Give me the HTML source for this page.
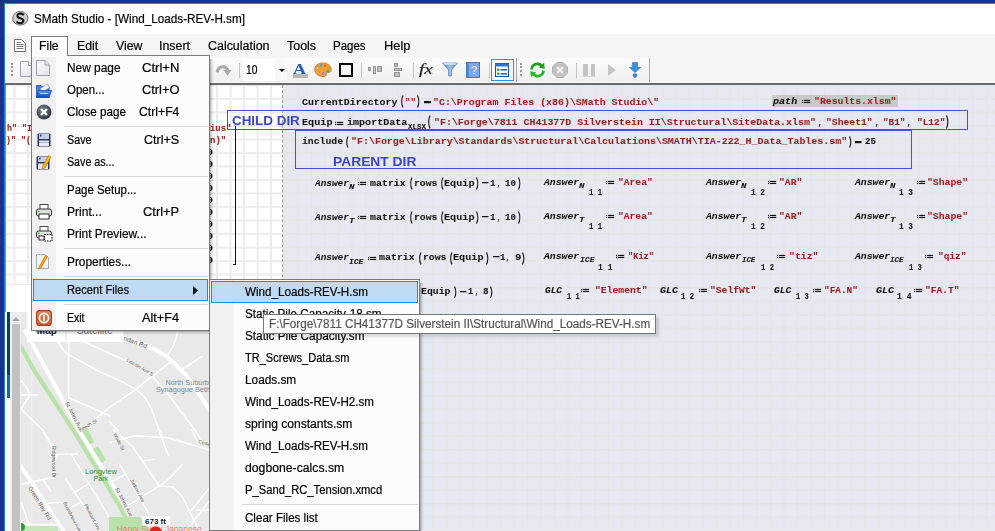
<!DOCTYPE html>
<html><head><meta charset="utf-8"><style>
*{margin:0;padding:0;box-sizing:border-box}
html,body{width:995px;height:531px;overflow:hidden;background:#fff}
body{position:relative;font-family:"Liberation Sans",sans-serif;font-size:12px;color:#000}
.a{position:absolute;white-space:nowrap}
.t{transform-origin:0 0}
.t.s{-webkit-text-stroke:0.2px currentColor}
.t.m{-webkit-text-stroke:0.08px currentColor}
svg.a{overflow:visible}
</style></head><body>
<div class="a" style="left:0;top:0;width:995px;height:531px;background:#fff"></div>
<div class="a" style="left:5px;top:85px;width:990px;height:446px;background-color:#e6e9f1;background-image:linear-gradient(to right,#e4e5e9 1.4px,transparent 1.4px),linear-gradient(to bottom,#e4e5e9 1.4px,transparent 1.6px);background-size:13.5px 13.5px;background-position:9.0px -0.6px"></div>
<div class="a" style="left:6px;top:85px;width:277px;height:199px;background-color:#fff;background-image:linear-gradient(to right,#ececec 1.5px,transparent 1.5px),linear-gradient(to bottom,#ececec 1.5px,transparent 1.6px);background-size:13.5px 13.5px;background-position:7.6px -0.5px"></div>
<div class="a" style="left:6px;top:284px;width:277px;height:28px;background:#fff;border-top:1px solid #f3e6dc"></div>
<div class="a" style="left:282px;top:85px;width:0;height:446px;border-left:1px dashed #9a9a9a"></div>
<div class="a" style="left:5px;top:85px;width:1px;height:227px;background:#8a8a8a"></div>
<div class="a" style="left:5px;top:4px;width:990px;height:30px;background:#fff"></div>
<div class="a" style="left:5px;top:34px;width:990px;height:49px;background:#f5f5f5"></div>
<div class="a" style="left:5px;top:83px;width:990px;height:2px;background:#6b6b6b"></div>
<div class="a" style="left:8px;top:58px;width:509px;height:24px;background:linear-gradient(#fcfcfc,#f0f0f0);border-radius:3px 0 0 3px;border-right:1px solid #a9a9a9"></div>
<div class="a" style="left:517px;top:58px;width:133px;height:24px;background:linear-gradient(#fcfcfc,#f0f0f0);border-radius:3px 0 0 3px;border-right:1px solid #a9a9a9"></div>
<div class="a" style="left:0;top:0;width:995px;height:3px;background:#1b3190"></div>
<div class="a" style="left:0;top:0;width:4px;height:531px;background:#1b3190"></div>
<div class="a" style="left:4px;top:3px;width:991px;height:1px;background:#1f86d6"></div>
<div class="a" style="left:4px;top:3px;width:1px;height:528px;background:#1f86d6"></div>
<svg class="a" style="left:12px;top:11px" width="17" height="15" viewBox="0 0 17 15">
<ellipse cx="8.3" cy="7.3" rx="7.6" ry="6.8" fill="#d0d0d0" stroke="#6a6a6a" stroke-width="1"/>
<path d="M11.6 4.2 C10.8 2.8 8.9 2.4 7.2 2.8 C5.3 3.3 4.8 5.2 6.2 6.3 C7.5 7.3 10.6 7.2 11.3 9 C12 10.8 10.2 12.2 8.2 12.2 C6.6 12.2 5.3 11.6 4.6 10.5" fill="none" stroke="#111" stroke-width="2.1"/>
</svg>
<svg class="a" style="left:13px;top:38px" width="14" height="15" viewBox="0 0 14 15"><path d="M1.5 1.5 H8.5 L12.5 5.5 V13.5 H1.5 Z" fill="#fff" stroke="#6e6e6e"/><path d="M3.5 4.5H8M3.5 6.5H10.5M3.5 8.5H10.5M3.5 10.5H10.5" stroke="#7a7a7a"/></svg>
<div class="a" style="left:31px;top:36px;width:37px;height:22px;background:#fcfcfc;border:1px solid #7b7b7b;border-bottom:none"></div>
<div class="a t s" style="left:33.70px;top:12.68px;font-size:12.5px;line-height:12.5px;transform:scaleX(0.9374);">SMath Studio - [Wind_Loads-REV-H.sm]</div>
<div class="a t s" style="left:39.40px;top:40.00px;font-size:12px;line-height:12px;transform:scaleX(1.0132);">File</div>
<div class="a t s" style="left:76.60px;top:40.00px;font-size:12px;line-height:12px;transform:scaleX(1.0296);">Edit</div>
<div class="a t s" style="left:115.50px;top:40.00px;font-size:12px;line-height:12px;transform:scaleX(1.0234);">View</div>
<div class="a t s" style="left:159.20px;top:40.00px;font-size:12px;line-height:12px;transform:scaleX(1.0328);">Insert</div>
<div class="a t s" style="left:207.70px;top:40.00px;font-size:12px;line-height:12px;transform:scaleX(1.0358);">Calculation</div>
<div class="a t s" style="left:286.90px;top:40.00px;font-size:12px;line-height:12px;transform:scaleX(1.0387);">Tools</div>
<div class="a t s" style="left:333.40px;top:40.00px;font-size:12px;line-height:12px;transform:scaleX(0.9579);">Pages</div>
<div class="a t s" style="left:383.60px;top:40.00px;font-size:12px;line-height:12px;transform:scaleX(1.0694);">Help</div>
<div class="a" style="left:772px;top:95px;width:126px;height:12px;background:#c9c9c9"></div>
<svg class="a" style="left:399.5px;top:95px" width="4" height="13"><path d="M3 0.5 Q0.3 6.5 3 12.5" fill="none" stroke="#141414" stroke-width="1.1"/></svg>
<svg class="a" style="left:417.2px;top:95px" width="4" height="13"><path d="M0.5 0.5 Q3.2 6.5 0.5 12.5" fill="none" stroke="#141414" stroke-width="1.1"/></svg>
<svg class="a" style="left:423.5px;top:101px" width="8" height="3"><rect x="0" y="0" width="7" height="2.2" fill="#141414"/></svg>
<svg class="a" style="left:801.50px;top:99.10px" width="9" height="5" viewBox="0 0 9 5"><rect x="0" y="0.9" width="1.2" height="1.2" fill="#141414"/><rect x="0" y="2.9" width="1.2" height="1.2" fill="#141414"/><rect x="2" y="0.85" width="6.2" height="1.2" fill="#141414"/><rect x="2" y="2.85" width="6.2" height="1.2" fill="#141414"/></svg>
<div class="a" style="left:227px;top:109.6px;width:741px;height:20.4px;border:1.5px solid #4650d2"></div>
<svg class="a" style="left:334.80px;top:120.50px" width="9" height="5" viewBox="0 0 9 5"><rect x="0" y="0.9" width="1.2" height="1.2" fill="#141414"/><rect x="0" y="2.9" width="1.2" height="1.2" fill="#141414"/><rect x="2" y="0.85" width="6.2" height="1.2" fill="#141414"/><rect x="2" y="2.85" width="6.2" height="1.2" fill="#141414"/></svg>
<svg class="a" style="left:427px;top:115.0px" width="4" height="14"><path d="M3 0.5 Q0.3 7.0 3 13.5" fill="none" stroke="#141414" stroke-width="1.1"/></svg>
<svg class="a" style="left:946.4px;top:115.0px" width="4" height="14"><path d="M0.5 0.5 Q3.2 7.0 0.5 13.5" fill="none" stroke="#141414" stroke-width="1.1"/></svg>
<div class="a" style="left:295px;top:130.2px;width:617px;height:38.8px;border:1.5px solid #4650d2"></div>
<svg class="a" style="left:344.6px;top:136.4px" width="4" height="12"><path d="M3 0.5 Q0.3 6.0 3 11.5" fill="none" stroke="#141414" stroke-width="1.1"/></svg>
<svg class="a" style="left:849px;top:136.4px" width="4" height="12"><path d="M0.5 0.5 Q3.2 6.0 0.5 11.5" fill="none" stroke="#141414" stroke-width="1.1"/></svg>
<svg class="a" style="left:854.5px;top:140.9px" width="7" height="3"><rect x="0" y="0" width="6.5" height="2.2" fill="#141414"/></svg>
<svg class="a" style="left:358.00px;top:181.30px" width="9" height="5" viewBox="0 0 9 5"><rect x="0" y="0.9" width="1.2" height="1.2" fill="#141414"/><rect x="0" y="2.9" width="1.2" height="1.2" fill="#141414"/><rect x="2" y="0.85" width="6.2" height="1.2" fill="#141414"/><rect x="2" y="2.85" width="6.2" height="1.2" fill="#141414"/></svg>
<svg class="a" style="left:408.5px;top:177.3px" width="4" height="13"><path d="M3 0.5 Q0.3 6.5 3 12.5" fill="none" stroke="#141414" stroke-width="1.1"/></svg>
<svg class="a" style="left:439.5px;top:177.3px" width="4" height="13"><path d="M3 0.5 Q0.3 6.5 3 12.5" fill="none" stroke="#141414" stroke-width="1.1"/></svg>
<svg class="a" style="left:476.2px;top:177.3px" width="4" height="13"><path d="M0.5 0.5 Q3.2 6.5 0.5 12.5" fill="none" stroke="#141414" stroke-width="1.1"/></svg>
<svg class="a" style="left:481.80px;top:181.00px" width="6.50" height="3"><rect x="0" y="1" width="6.50" height="1.25" fill="#141414"/></svg>
<svg class="a" style="left:518.4px;top:177.3px" width="4" height="13"><path d="M0.5 0.5 Q3.2 6.5 0.5 12.5" fill="none" stroke="#141414" stroke-width="1.1"/></svg>
<svg class="a" style="left:358.00px;top:215.00px" width="9" height="5" viewBox="0 0 9 5"><rect x="0" y="0.9" width="1.2" height="1.2" fill="#141414"/><rect x="0" y="2.9" width="1.2" height="1.2" fill="#141414"/><rect x="2" y="0.85" width="6.2" height="1.2" fill="#141414"/><rect x="2" y="2.85" width="6.2" height="1.2" fill="#141414"/></svg>
<svg class="a" style="left:408.5px;top:211px" width="4" height="13"><path d="M3 0.5 Q0.3 6.5 3 12.5" fill="none" stroke="#141414" stroke-width="1.1"/></svg>
<svg class="a" style="left:439.5px;top:211px" width="4" height="13"><path d="M3 0.5 Q0.3 6.5 3 12.5" fill="none" stroke="#141414" stroke-width="1.1"/></svg>
<svg class="a" style="left:476.2px;top:211px" width="4" height="13"><path d="M0.5 0.5 Q3.2 6.5 0.5 12.5" fill="none" stroke="#141414" stroke-width="1.1"/></svg>
<svg class="a" style="left:481.80px;top:214.70px" width="6.50" height="3"><rect x="0" y="1" width="6.50" height="1.25" fill="#141414"/></svg>
<svg class="a" style="left:518.4px;top:211px" width="4" height="13"><path d="M0.5 0.5 Q3.2 6.5 0.5 12.5" fill="none" stroke="#141414" stroke-width="1.1"/></svg>
<svg class="a" style="left:367.80px;top:255.70px" width="9" height="5" viewBox="0 0 9 5"><rect x="0" y="0.9" width="1.2" height="1.2" fill="#141414"/><rect x="0" y="2.9" width="1.2" height="1.2" fill="#141414"/><rect x="2" y="0.85" width="6.2" height="1.2" fill="#141414"/><rect x="2" y="2.85" width="6.2" height="1.2" fill="#141414"/></svg>
<svg class="a" style="left:417.5px;top:251.7px" width="4" height="13"><path d="M3 0.5 Q0.3 6.5 3 12.5" fill="none" stroke="#141414" stroke-width="1.1"/></svg>
<svg class="a" style="left:448.7px;top:251.7px" width="4" height="13"><path d="M3 0.5 Q0.3 6.5 3 12.5" fill="none" stroke="#141414" stroke-width="1.1"/></svg>
<svg class="a" style="left:486px;top:251.7px" width="4" height="13"><path d="M0.5 0.5 Q3.2 6.5 0.5 12.5" fill="none" stroke="#141414" stroke-width="1.1"/></svg>
<svg class="a" style="left:492.60px;top:255.40px" width="6.50" height="3"><rect x="0" y="1" width="6.50" height="1.25" fill="#141414"/></svg>
<svg class="a" style="left:522.2px;top:251.7px" width="4" height="13"><path d="M0.5 0.5 Q3.2 6.5 0.5 12.5" fill="none" stroke="#141414" stroke-width="1.1"/></svg>
<svg class="a" style="left:605.60px;top:180.10px" width="9" height="5" viewBox="0 0 9 5"><rect x="0" y="0.9" width="1.2" height="1.2" fill="#141414"/><rect x="0" y="2.9" width="1.2" height="1.2" fill="#141414"/><rect x="2" y="0.85" width="6.2" height="1.2" fill="#141414"/><rect x="2" y="2.85" width="6.2" height="1.2" fill="#141414"/></svg>
<svg class="a" style="left:767.70px;top:180.10px" width="9" height="5" viewBox="0 0 9 5"><rect x="0" y="0.9" width="1.2" height="1.2" fill="#141414"/><rect x="0" y="2.9" width="1.2" height="1.2" fill="#141414"/><rect x="2" y="0.85" width="6.2" height="1.2" fill="#141414"/><rect x="2" y="2.85" width="6.2" height="1.2" fill="#141414"/></svg>
<svg class="a" style="left:916.50px;top:180.10px" width="9" height="5" viewBox="0 0 9 5"><rect x="0" y="0.9" width="1.2" height="1.2" fill="#141414"/><rect x="0" y="2.9" width="1.2" height="1.2" fill="#141414"/><rect x="2" y="0.85" width="6.2" height="1.2" fill="#141414"/><rect x="2" y="2.85" width="6.2" height="1.2" fill="#141414"/></svg>
<svg class="a" style="left:605.60px;top:214.00px" width="9" height="5" viewBox="0 0 9 5"><rect x="0" y="0.9" width="1.2" height="1.2" fill="#141414"/><rect x="0" y="2.9" width="1.2" height="1.2" fill="#141414"/><rect x="2" y="0.85" width="6.2" height="1.2" fill="#141414"/><rect x="2" y="2.85" width="6.2" height="1.2" fill="#141414"/></svg>
<svg class="a" style="left:767.70px;top:214.00px" width="9" height="5" viewBox="0 0 9 5"><rect x="0" y="0.9" width="1.2" height="1.2" fill="#141414"/><rect x="0" y="2.9" width="1.2" height="1.2" fill="#141414"/><rect x="2" y="0.85" width="6.2" height="1.2" fill="#141414"/><rect x="2" y="2.85" width="6.2" height="1.2" fill="#141414"/></svg>
<svg class="a" style="left:916.50px;top:214.00px" width="9" height="5" viewBox="0 0 9 5"><rect x="0" y="0.9" width="1.2" height="1.2" fill="#141414"/><rect x="0" y="2.9" width="1.2" height="1.2" fill="#141414"/><rect x="2" y="0.85" width="6.2" height="1.2" fill="#141414"/><rect x="2" y="2.85" width="6.2" height="1.2" fill="#141414"/></svg>
<svg class="a" style="left:615.60px;top:254.20px" width="9" height="5" viewBox="0 0 9 5"><rect x="0" y="0.9" width="1.2" height="1.2" fill="#141414"/><rect x="0" y="2.9" width="1.2" height="1.2" fill="#141414"/><rect x="2" y="0.85" width="6.2" height="1.2" fill="#141414"/><rect x="2" y="2.85" width="6.2" height="1.2" fill="#141414"/></svg>
<svg class="a" style="left:777.40px;top:254.20px" width="9" height="5" viewBox="0 0 9 5"><rect x="0" y="0.9" width="1.2" height="1.2" fill="#141414"/><rect x="0" y="2.9" width="1.2" height="1.2" fill="#141414"/><rect x="2" y="0.85" width="6.2" height="1.2" fill="#141414"/><rect x="2" y="2.85" width="6.2" height="1.2" fill="#141414"/></svg>
<svg class="a" style="left:925.40px;top:254.20px" width="9" height="5" viewBox="0 0 9 5"><rect x="0" y="0.9" width="1.2" height="1.2" fill="#141414"/><rect x="0" y="2.9" width="1.2" height="1.2" fill="#141414"/><rect x="2" y="0.85" width="6.2" height="1.2" fill="#141414"/><rect x="2" y="2.85" width="6.2" height="1.2" fill="#141414"/></svg>
<svg class="a" style="left:581.20px;top:288.00px" width="9" height="5" viewBox="0 0 9 5"><rect x="0" y="0.9" width="1.2" height="1.2" fill="#141414"/><rect x="0" y="2.9" width="1.2" height="1.2" fill="#141414"/><rect x="2" y="0.85" width="6.2" height="1.2" fill="#141414"/><rect x="2" y="2.85" width="6.2" height="1.2" fill="#141414"/></svg>
<svg class="a" style="left:698.90px;top:288.00px" width="9" height="5" viewBox="0 0 9 5"><rect x="0" y="0.9" width="1.2" height="1.2" fill="#141414"/><rect x="0" y="2.9" width="1.2" height="1.2" fill="#141414"/><rect x="2" y="0.85" width="6.2" height="1.2" fill="#141414"/><rect x="2" y="2.85" width="6.2" height="1.2" fill="#141414"/></svg>
<svg class="a" style="left:813.00px;top:288.00px" width="9" height="5" viewBox="0 0 9 5"><rect x="0" y="0.9" width="1.2" height="1.2" fill="#141414"/><rect x="0" y="2.9" width="1.2" height="1.2" fill="#141414"/><rect x="2" y="0.85" width="6.2" height="1.2" fill="#141414"/><rect x="2" y="2.85" width="6.2" height="1.2" fill="#141414"/></svg>
<svg class="a" style="left:913.60px;top:288.00px" width="9" height="5" viewBox="0 0 9 5"><rect x="0" y="0.9" width="1.2" height="1.2" fill="#141414"/><rect x="0" y="2.9" width="1.2" height="1.2" fill="#141414"/><rect x="2" y="0.85" width="6.2" height="1.2" fill="#141414"/><rect x="2" y="2.85" width="6.2" height="1.2" fill="#141414"/></svg>
<svg class="a" style="left:453.9px;top:285.5px" width="4" height="12.5"><path d="M0.5 0.5 Q3.2 6.25 0.5 12.0" fill="none" stroke="#141414" stroke-width="1.1"/></svg>
<svg class="a" style="left:460.00px;top:289.50px" width="6.30" height="3"><rect x="0" y="1" width="6.30" height="1.25" fill="#141414"/></svg>
<svg class="a" style="left:489.8px;top:285.5px" width="4" height="12.5"><path d="M0.5 0.5 Q3.2 6.25 0.5 12.0" fill="none" stroke="#141414" stroke-width="1.1"/></svg>
<div class="a t m" style="left:301.60px;top:97.55px;font-size:9.8px;line-height:9.8px;font-family:'Liberation Mono',monospace;font-weight:bold;color:#141414;transform:scaleX(1.0151);">CurrentDirectory</div>
<div class="a t m" style="left:404.50px;top:97.55px;font-size:9.8px;line-height:9.8px;font-family:'Liberation Mono',monospace;font-weight:bold;color:#9c1e1e;transform:scaleX(0.9349);">""</div>
<div class="a t m" style="left:433.30px;top:97.55px;font-size:9.8px;line-height:9.8px;font-family:'Liberation Mono',monospace;font-weight:bold;color:#9c1e1e;transform:scaleX(1.0125);">"C:\Program Files (x86)\SMath Studio\"</div>
<div class="a t m" style="left:773.40px;top:96.65px;font-size:9.8px;line-height:9.8px;font-family:'Liberation Mono',monospace;font-weight:bold;font-style:italic;color:#141414;transform:scaleX(1.0284);">path</div>
<div class="a t m" style="left:813.50px;top:96.65px;font-size:9.8px;line-height:9.8px;font-family:'Liberation Mono',monospace;font-weight:bold;color:#9c1e1e;transform:scaleX(1.0011);">"Results.xlsm"</div>
<div class="a t" style="left:231.50px;top:114.34px;font-size:13.6px;line-height:13.6px;font-weight:bold;color:#3b45c9;transform:scaleX(0.9864);">CHILD DIR</div>
<div class="a t m" style="left:301.60px;top:118.05px;font-size:9.8px;line-height:9.8px;font-family:'Liberation Mono',monospace;font-weight:bold;color:#141414;transform:scaleX(1.0372);">Equip</div>
<div class="a t m" style="left:346.60px;top:118.05px;font-size:9.8px;line-height:9.8px;font-family:'Liberation Mono',monospace;font-weight:bold;color:#141414;transform:scaleX(1.0273);">importData</div>
<div class="a t m" style="left:407.50px;top:124.22px;font-size:7.6px;line-height:7.6px;font-family:'Liberation Mono',monospace;font-weight:bold;color:#141414;transform:scaleX(0.9871);">XLSX</div>
<div class="a t m" style="left:433.50px;top:118.05px;font-size:9.8px;line-height:9.8px;font-family:'Liberation Mono',monospace;font-weight:bold;color:#9c1e1e;transform:scaleX(1.0150);">"F:\Forge\7811 CH41377D Silverstein II\Structural\SiteData.xlsm"</div>
<div class="a t m" style="left:818.00px;top:118.05px;font-size:9.8px;line-height:9.8px;font-family:'Liberation Mono',monospace;font-weight:bold;color:#141414;transform:scaleX(0.6790);">,</div>
<div class="a t m" style="left:825.70px;top:118.05px;font-size:9.8px;line-height:9.8px;font-family:'Liberation Mono',monospace;font-weight:bold;color:#9c1e1e;transform:scaleX(0.9926);">"Sheet1"</div>
<div class="a t m" style="left:874.50px;top:118.05px;font-size:9.8px;line-height:9.8px;font-family:'Liberation Mono',monospace;font-weight:bold;color:#141414;transform:scaleX(0.6790);">,</div>
<div class="a t m" style="left:883.20px;top:118.05px;font-size:9.8px;line-height:9.8px;font-family:'Liberation Mono',monospace;font-weight:bold;color:#9c1e1e;transform:scaleX(0.9562);">"B1"</div>
<div class="a t m" style="left:906.50px;top:118.05px;font-size:9.8px;line-height:9.8px;font-family:'Liberation Mono',monospace;font-weight:bold;color:#141414;transform:scaleX(0.6790);">,</div>
<div class="a t m" style="left:916.60px;top:118.05px;font-size:9.8px;line-height:9.8px;font-family:'Liberation Mono',monospace;font-weight:bold;color:#9c1e1e;transform:scaleX(0.9658);">"L12"</div>
<div class="a t m" style="left:301.60px;top:137.45px;font-size:9.8px;line-height:9.8px;font-family:'Liberation Mono',monospace;font-weight:bold;color:#141414;transform:scaleX(0.9962);">include</div>
<div class="a t m" style="left:350.60px;top:137.45px;font-size:9.8px;line-height:9.8px;font-family:'Liberation Mono',monospace;font-weight:bold;color:#9c1e1e;transform:scaleX(1.0169);">"F:\Forge\Library\Standards\Structural\Calculations\SMATH\TIA-222_H_Data_Tables.sm"</div>
<div class="a t m" style="left:865.00px;top:137.45px;font-size:9.8px;line-height:9.8px;font-family:'Liberation Mono',monospace;font-weight:bold;color:#141414;transform:scaleX(0.9349);">25</div>
<div class="a t" style="left:332.70px;top:154.54px;font-size:13.6px;line-height:13.6px;font-weight:bold;color:#3b45c9;transform:scaleX(1.0161);">PARENT DIR</div>
<div class="a t m" style="left:314.90px;top:178.85px;font-size:9.8px;line-height:9.8px;font-family:'Liberation Mono',monospace;font-weight:bold;font-style:italic;color:#141414;transform:scaleX(0.9609);">Answer</div>
<div class="a t m" style="left:348.60px;top:184.10px;font-size:7.5px;line-height:7.5px;font-family:'Liberation Mono',monospace;font-weight:bold;font-style:italic;color:#141414;transform:scaleX(1.2180);">N</div>
<div class="a t m" style="left:370.00px;top:178.85px;font-size:9.8px;line-height:9.8px;font-family:'Liberation Mono',monospace;font-weight:bold;color:#141414;transform:scaleX(1.0147);">matrix</div>
<div class="a t m" style="left:414.00px;top:178.85px;font-size:9.8px;line-height:9.8px;font-family:'Liberation Mono',monospace;font-weight:bold;color:#141414;transform:scaleX(0.9987);">rows</div>
<div class="a t m" style="left:444.00px;top:178.85px;font-size:9.8px;line-height:9.8px;font-family:'Liberation Mono',monospace;font-weight:bold;color:#141414;transform:scaleX(1.0372);">Equip</div>
<div class="a t m" style="left:490.30px;top:178.85px;font-size:9.8px;line-height:9.8px;font-family:'Liberation Mono',monospace;font-weight:bold;color:#141414;transform:scaleX(0.9337);">1</div>
<div class="a t m" style="left:497.30px;top:178.85px;font-size:9.8px;line-height:9.8px;font-family:'Liberation Mono',monospace;font-weight:bold;color:#141414;transform:scaleX(0.5942);">,</div>
<div class="a t m" style="left:505.40px;top:178.85px;font-size:9.8px;line-height:9.8px;font-family:'Liberation Mono',monospace;font-weight:bold;color:#141414;transform:scaleX(0.9349);">10</div>
<div class="a t m" style="left:314.90px;top:212.55px;font-size:9.8px;line-height:9.8px;font-family:'Liberation Mono',monospace;font-weight:bold;font-style:italic;color:#141414;transform:scaleX(0.9609);">Answer</div>
<div class="a t m" style="left:348.60px;top:217.80px;font-size:7.5px;line-height:7.5px;font-family:'Liberation Mono',monospace;font-weight:bold;font-style:italic;color:#141414;transform:scaleX(1.2180);">T</div>
<div class="a t m" style="left:370.00px;top:212.55px;font-size:9.8px;line-height:9.8px;font-family:'Liberation Mono',monospace;font-weight:bold;color:#141414;transform:scaleX(1.0147);">matrix</div>
<div class="a t m" style="left:414.00px;top:212.55px;font-size:9.8px;line-height:9.8px;font-family:'Liberation Mono',monospace;font-weight:bold;color:#141414;transform:scaleX(0.9987);">rows</div>
<div class="a t m" style="left:444.00px;top:212.55px;font-size:9.8px;line-height:9.8px;font-family:'Liberation Mono',monospace;font-weight:bold;color:#141414;transform:scaleX(1.0372);">Equip</div>
<div class="a t m" style="left:490.30px;top:212.55px;font-size:9.8px;line-height:9.8px;font-family:'Liberation Mono',monospace;font-weight:bold;color:#141414;transform:scaleX(0.9337);">1</div>
<div class="a t m" style="left:497.30px;top:212.55px;font-size:9.8px;line-height:9.8px;font-family:'Liberation Mono',monospace;font-weight:bold;color:#141414;transform:scaleX(0.5942);">,</div>
<div class="a t m" style="left:505.40px;top:212.55px;font-size:9.8px;line-height:9.8px;font-family:'Liberation Mono',monospace;font-weight:bold;color:#141414;transform:scaleX(0.9349);">10</div>
<div class="a t m" style="left:314.90px;top:253.25px;font-size:9.8px;line-height:9.8px;font-family:'Liberation Mono',monospace;font-weight:bold;font-style:italic;color:#141414;transform:scaleX(0.9609);">Answer</div>
<div class="a t m" style="left:348.60px;top:258.50px;font-size:7.5px;line-height:7.5px;font-family:'Liberation Mono',monospace;font-weight:bold;font-style:italic;color:#141414;transform:scaleX(1.0654);">ICE</div>
<div class="a t m" style="left:379.30px;top:253.25px;font-size:9.8px;line-height:9.8px;font-family:'Liberation Mono',monospace;font-weight:bold;color:#141414;transform:scaleX(1.0147);">matrix</div>
<div class="a t m" style="left:422.60px;top:253.25px;font-size:9.8px;line-height:9.8px;font-family:'Liberation Mono',monospace;font-weight:bold;color:#141414;transform:scaleX(0.9987);">rows</div>
<div class="a t m" style="left:453.30px;top:253.25px;font-size:9.8px;line-height:9.8px;font-family:'Liberation Mono',monospace;font-weight:bold;color:#141414;transform:scaleX(1.0372);">Equip</div>
<div class="a t m" style="left:499.60px;top:253.25px;font-size:9.8px;line-height:9.8px;font-family:'Liberation Mono',monospace;font-weight:bold;color:#141414;transform:scaleX(0.9337);">1</div>
<div class="a t m" style="left:506.00px;top:253.25px;font-size:9.8px;line-height:9.8px;font-family:'Liberation Mono',monospace;font-weight:bold;color:#141414;transform:scaleX(0.5942);">,</div>
<div class="a t m" style="left:514.60px;top:253.25px;font-size:9.8px;line-height:9.8px;font-family:'Liberation Mono',monospace;font-weight:bold;color:#141414;transform:scaleX(1.0865);">9</div>
<div class="a t m" style="left:544.30px;top:177.65px;font-size:9.8px;line-height:9.8px;font-family:'Liberation Mono',monospace;font-weight:bold;font-style:italic;color:#141414;transform:scaleX(0.9977);">Answer</div>
<div class="a t m" style="left:579.30px;top:182.70px;font-size:7.5px;line-height:7.5px;font-family:'Liberation Mono',monospace;font-weight:bold;font-style:italic;color:#141414;transform:scaleX(1.2180);">N</div>
<div class="a t m" style="left:588.80px;top:188.96px;font-size:9px;line-height:9px;font-family:'Liberation Mono',monospace;font-weight:bold;color:#141414;transform:scaleX(0.8023);">1 1</div>
<div class="a t m" style="left:617.50px;top:177.65px;font-size:9.8px;line-height:9.8px;font-family:'Liberation Mono',monospace;font-weight:bold;color:#9c1e1e;transform:scaleX(0.9835);">"Area"</div>
<div class="a t m" style="left:706.00px;top:177.65px;font-size:9.8px;line-height:9.8px;font-family:'Liberation Mono',monospace;font-weight:bold;font-style:italic;color:#141414;transform:scaleX(0.9977);">Answer</div>
<div class="a t m" style="left:741.20px;top:182.70px;font-size:7.5px;line-height:7.5px;font-family:'Liberation Mono',monospace;font-weight:bold;font-style:italic;color:#141414;transform:scaleX(1.2180);">N</div>
<div class="a t m" style="left:750.60px;top:188.96px;font-size:9px;line-height:9px;font-family:'Liberation Mono',monospace;font-weight:bold;color:#141414;transform:scaleX(0.8640);">1 2</div>
<div class="a t m" style="left:779.00px;top:177.65px;font-size:9.8px;line-height:9.8px;font-family:'Liberation Mono',monospace;font-weight:bold;color:#9c1e1e;transform:scaleX(0.9902);">"AR"</div>
<div class="a t m" style="left:854.80px;top:177.65px;font-size:9.8px;line-height:9.8px;font-family:'Liberation Mono',monospace;font-weight:bold;font-style:italic;color:#141414;transform:scaleX(0.9977);">Answer</div>
<div class="a t m" style="left:890.30px;top:182.70px;font-size:7.5px;line-height:7.5px;font-family:'Liberation Mono',monospace;font-weight:bold;font-style:italic;color:#141414;transform:scaleX(1.2180);">N</div>
<div class="a t m" style="left:898.70px;top:188.96px;font-size:9px;line-height:9px;font-family:'Liberation Mono',monospace;font-weight:bold;color:#141414;transform:scaleX(0.8640);">1 3</div>
<div class="a t m" style="left:927.20px;top:177.65px;font-size:9.8px;line-height:9.8px;font-family:'Liberation Mono',monospace;font-weight:bold;color:#9c1e1e;transform:scaleX(0.9962);">"Shape"</div>
<div class="a t m" style="left:544.30px;top:211.55px;font-size:9.8px;line-height:9.8px;font-family:'Liberation Mono',monospace;font-weight:bold;font-style:italic;color:#141414;transform:scaleX(0.9977);">Answer</div>
<div class="a t m" style="left:579.30px;top:216.60px;font-size:7.5px;line-height:7.5px;font-family:'Liberation Mono',monospace;font-weight:bold;font-style:italic;color:#141414;transform:scaleX(1.2180);">T</div>
<div class="a t m" style="left:588.80px;top:222.66px;font-size:9px;line-height:9px;font-family:'Liberation Mono',monospace;font-weight:bold;color:#141414;transform:scaleX(0.8023);">1 1</div>
<div class="a t m" style="left:617.50px;top:211.55px;font-size:9.8px;line-height:9.8px;font-family:'Liberation Mono',monospace;font-weight:bold;color:#9c1e1e;transform:scaleX(0.9835);">"Area"</div>
<div class="a t m" style="left:706.00px;top:211.55px;font-size:9.8px;line-height:9.8px;font-family:'Liberation Mono',monospace;font-weight:bold;font-style:italic;color:#141414;transform:scaleX(0.9977);">Answer</div>
<div class="a t m" style="left:741.20px;top:216.60px;font-size:7.5px;line-height:7.5px;font-family:'Liberation Mono',monospace;font-weight:bold;font-style:italic;color:#141414;transform:scaleX(1.2180);">T</div>
<div class="a t m" style="left:750.60px;top:222.66px;font-size:9px;line-height:9px;font-family:'Liberation Mono',monospace;font-weight:bold;color:#141414;transform:scaleX(0.8640);">1 2</div>
<div class="a t m" style="left:779.00px;top:211.55px;font-size:9.8px;line-height:9.8px;font-family:'Liberation Mono',monospace;font-weight:bold;color:#9c1e1e;transform:scaleX(0.9902);">"AR"</div>
<div class="a t m" style="left:854.80px;top:211.55px;font-size:9.8px;line-height:9.8px;font-family:'Liberation Mono',monospace;font-weight:bold;font-style:italic;color:#141414;transform:scaleX(0.9977);">Answer</div>
<div class="a t m" style="left:890.30px;top:216.60px;font-size:7.5px;line-height:7.5px;font-family:'Liberation Mono',monospace;font-weight:bold;font-style:italic;color:#141414;transform:scaleX(1.2180);">T</div>
<div class="a t m" style="left:898.70px;top:222.66px;font-size:9px;line-height:9px;font-family:'Liberation Mono',monospace;font-weight:bold;color:#141414;transform:scaleX(0.8640);">1 3</div>
<div class="a t m" style="left:927.20px;top:211.55px;font-size:9.8px;line-height:9.8px;font-family:'Liberation Mono',monospace;font-weight:bold;color:#9c1e1e;transform:scaleX(0.9962);">"Shape"</div>
<div class="a t m" style="left:544.30px;top:251.75px;font-size:9.8px;line-height:9.8px;font-family:'Liberation Mono',monospace;font-weight:bold;font-style:italic;color:#141414;transform:scaleX(0.9977);">Answer</div>
<div class="a t m" style="left:580.00px;top:256.80px;font-size:7.5px;line-height:7.5px;font-family:'Liberation Mono',monospace;font-weight:bold;font-style:italic;color:#141414;transform:scaleX(1.0728);">ICE</div>
<div class="a t m" style="left:597.50px;top:263.76px;font-size:9px;line-height:9px;font-family:'Liberation Mono',monospace;font-weight:bold;color:#141414;transform:scaleX(0.8949);">1 1</div>
<div class="a t m" style="left:628.30px;top:251.75px;font-size:9.8px;line-height:9.8px;font-family:'Liberation Mono',monospace;font-weight:bold;color:#9c1e1e;transform:scaleX(0.8842);">"Kiz"</div>
<div class="a t m" style="left:706.00px;top:251.75px;font-size:9.8px;line-height:9.8px;font-family:'Liberation Mono',monospace;font-weight:bold;font-style:italic;color:#141414;transform:scaleX(0.9977);">Answer</div>
<div class="a t m" style="left:742.30px;top:256.80px;font-size:7.5px;line-height:7.5px;font-family:'Liberation Mono',monospace;font-weight:bold;font-style:italic;color:#141414;transform:scaleX(0.9766);">ICE</div>
<div class="a t m" style="left:760.60px;top:263.76px;font-size:9px;line-height:9px;font-family:'Liberation Mono',monospace;font-weight:bold;color:#141414;transform:scaleX(0.8147);">1 2</div>
<div class="a t m" style="left:789.00px;top:251.75px;font-size:9.8px;line-height:9.8px;font-family:'Liberation Mono',monospace;font-weight:bold;color:#9c1e1e;transform:scaleX(0.9998);">"tiz"</div>
<div class="a t m" style="left:854.80px;top:251.75px;font-size:9.8px;line-height:9.8px;font-family:'Liberation Mono',monospace;font-weight:bold;font-style:italic;color:#141414;transform:scaleX(0.9977);">Answer</div>
<div class="a t m" style="left:890.30px;top:256.80px;font-size:7.5px;line-height:7.5px;font-family:'Liberation Mono',monospace;font-weight:bold;font-style:italic;color:#141414;transform:scaleX(0.9988);">ICE</div>
<div class="a t m" style="left:909.30px;top:263.76px;font-size:9px;line-height:9px;font-family:'Liberation Mono',monospace;font-weight:bold;color:#141414;transform:scaleX(0.7838);">1 3</div>
<div class="a t m" style="left:937.90px;top:251.75px;font-size:9.8px;line-height:9.8px;font-family:'Liberation Mono',monospace;font-weight:bold;color:#9c1e1e;transform:scaleX(0.9692);">"qiz"</div>
<div class="a t m" style="left:545.00px;top:285.55px;font-size:9.8px;line-height:9.8px;font-family:'Liberation Mono',monospace;font-weight:bold;font-style:italic;color:#141414;transform:scaleX(0.9637);">GLC</div>
<div class="a t m" style="left:566.80px;top:292.96px;font-size:9px;line-height:9px;font-family:'Liberation Mono',monospace;font-weight:bold;color:#141414;transform:scaleX(0.7776);">1 1</div>
<div class="a t m" style="left:595.00px;top:285.55px;font-size:9.8px;line-height:9.8px;font-family:'Liberation Mono',monospace;font-weight:bold;color:#9c1e1e;transform:scaleX(0.9920);">"Element"</div>
<div class="a t m" style="left:659.60px;top:285.55px;font-size:9.8px;line-height:9.8px;font-family:'Liberation Mono',monospace;font-weight:bold;font-style:italic;color:#141414;transform:scaleX(1.0147);">GLC</div>
<div class="a t m" style="left:681.00px;top:292.96px;font-size:9px;line-height:9px;font-family:'Liberation Mono',monospace;font-weight:bold;color:#141414;transform:scaleX(0.8147);">1 2</div>
<div class="a t m" style="left:709.60px;top:285.55px;font-size:9.8px;line-height:9.8px;font-family:'Liberation Mono',monospace;font-weight:bold;color:#9c1e1e;transform:scaleX(0.9863);">"SelfWt"</div>
<div class="a t m" style="left:773.80px;top:285.55px;font-size:9.8px;line-height:9.8px;font-family:'Liberation Mono',monospace;font-weight:bold;font-style:italic;color:#141414;transform:scaleX(0.9750);">GLC</div>
<div class="a t m" style="left:795.90px;top:292.96px;font-size:9px;line-height:9px;font-family:'Liberation Mono',monospace;font-weight:bold;color:#141414;transform:scaleX(0.7838);">1 3</div>
<div class="a t m" style="left:824.40px;top:285.55px;font-size:9.8px;line-height:9.8px;font-family:'Liberation Mono',monospace;font-weight:bold;color:#9c1e1e;transform:scaleX(0.9609);">"FA.N"</div>
<div class="a t m" style="left:875.50px;top:285.55px;font-size:9.8px;line-height:9.8px;font-family:'Liberation Mono',monospace;font-weight:bold;font-style:italic;color:#141414;transform:scaleX(1.0204);">GLC</div>
<div class="a t m" style="left:896.90px;top:292.96px;font-size:9px;line-height:9px;font-family:'Liberation Mono',monospace;font-weight:bold;color:#141414;transform:scaleX(0.8949);">1 4</div>
<div class="a t m" style="left:925.40px;top:285.55px;font-size:9.8px;line-height:9.8px;font-family:'Liberation Mono',monospace;font-weight:bold;color:#9c1e1e;transform:scaleX(0.9807);">"FA.T"</div>
<div class="a t m" style="left:421.40px;top:286.65px;font-size:9.8px;line-height:9.8px;font-family:'Liberation Mono',monospace;font-weight:bold;color:#141414;transform:scaleX(1.0032);">Equip</div>
<div class="a t m" style="left:468.00px;top:286.65px;font-size:9.8px;line-height:9.8px;font-family:'Liberation Mono',monospace;font-weight:bold;color:#141414;transform:scaleX(0.8488);">1</div>
<div class="a t m" style="left:474.80px;top:286.65px;font-size:9.8px;line-height:9.8px;font-family:'Liberation Mono',monospace;font-weight:bold;color:#141414;transform:scaleX(0.5942);">,</div>
<div class="a t m" style="left:483.00px;top:286.65px;font-size:9.8px;line-height:9.8px;font-family:'Liberation Mono',monospace;font-weight:bold;color:#141414;transform:scaleX(0.9507);">8</div>
<div class="a t m" style="left:7.00px;top:124.05px;font-size:9.8px;line-height:9.8px;font-family:'Liberation Mono',monospace;font-weight:bold;color:#9c1e1e;transform:scaleX(0.8502);">h" "I</div>
<div class="a t m" style="left:6.00px;top:135.85px;font-size:9.8px;line-height:9.8px;font-family:'Liberation Mono',monospace;font-weight:bold;color:#9c1e1e;transform:scaleX(0.8502);">)" "(</div>
<div class="a t m" style="left:210.20px;top:124.05px;font-size:9.8px;line-height:9.8px;font-family:'Liberation Mono',monospace;font-weight:bold;color:#9c1e1e;transform:scaleX(0.9094);">ius"</div>
<div class="a t m" style="left:210.20px;top:136.05px;font-size:9.8px;line-height:9.8px;font-family:'Liberation Mono',monospace;font-weight:bold;color:#9c1e1e;transform:scaleX(0.9183);">n)"</div>
<div class="a t m" style="left:206.50px;top:148.35px;font-size:9.8px;line-height:9.8px;font-family:'Liberation Mono',monospace;font-weight:bold;color:#141414;transform:scaleX(1.0186);">0</div>
<div class="a t m" style="left:206.50px;top:160.35px;font-size:9.8px;line-height:9.8px;font-family:'Liberation Mono',monospace;font-weight:bold;color:#141414;transform:scaleX(1.0186);">0</div>
<div class="a t m" style="left:206.50px;top:172.35px;font-size:9.8px;line-height:9.8px;font-family:'Liberation Mono',monospace;font-weight:bold;color:#141414;transform:scaleX(1.0186);">0</div>
<div class="a t m" style="left:206.50px;top:184.35px;font-size:9.8px;line-height:9.8px;font-family:'Liberation Mono',monospace;font-weight:bold;color:#141414;transform:scaleX(1.0186);">0</div>
<div class="a t m" style="left:206.50px;top:196.35px;font-size:9.8px;line-height:9.8px;font-family:'Liberation Mono',monospace;font-weight:bold;color:#141414;transform:scaleX(1.0186);">0</div>
<div class="a t m" style="left:206.50px;top:208.35px;font-size:9.8px;line-height:9.8px;font-family:'Liberation Mono',monospace;font-weight:bold;color:#141414;transform:scaleX(1.0186);">0</div>
<div class="a t m" style="left:206.50px;top:220.35px;font-size:9.8px;line-height:9.8px;font-family:'Liberation Mono',monospace;font-weight:bold;color:#141414;transform:scaleX(1.0186);">0</div>
<div class="a t m" style="left:206.50px;top:232.35px;font-size:9.8px;line-height:9.8px;font-family:'Liberation Mono',monospace;font-weight:bold;color:#141414;transform:scaleX(1.0186);">0</div>
<div class="a t m" style="left:206.50px;top:244.35px;font-size:9.8px;line-height:9.8px;font-family:'Liberation Mono',monospace;font-weight:bold;color:#141414;transform:scaleX(1.0186);">0</div>
<div class="a t m" style="left:206.50px;top:256.35px;font-size:9.8px;line-height:9.8px;font-family:'Liberation Mono',monospace;font-weight:bold;color:#141414;transform:scaleX(1.0186);">0</div>
<div class="a" style="left:235.2px;top:125.5px;width:1.2px;height:139px;background:#111"></div>
<div class="a" style="left:232.5px;top:263.5px;width:3.5px;height:1.2px;background:#111"></div>
<div class="a" style="left:11px;top:62.5px;width:2px;height:2px;background:#9a9a9a"></div>
<div class="a" style="left:11px;top:66.2px;width:2px;height:2px;background:#9a9a9a"></div>
<div class="a" style="left:11px;top:69.9px;width:2px;height:2px;background:#9a9a9a"></div>
<div class="a" style="left:11px;top:73.6px;width:2px;height:2px;background:#9a9a9a"></div>
<svg class="a" style="left:20px;top:61px" width="13" height="16" viewBox="0 0 13 16"><defs><linearGradient id="pg" x1="0" y1="0" x2="1" y2="1"><stop offset="0" stop-color="#fff"/><stop offset="1" stop-color="#dde0ea"/></linearGradient></defs><path d="M0.5 0.5H8.5L12.5 4.5V15.5H0.5Z" fill="url(#pg)" stroke="#9da3ae"/><path d="M8.5 0.5V4.5H12.5" fill="#e8e8e8" stroke="#9da3ae"/></svg>
<svg class="a" style="left:215px;top:63px" width="17" height="14" viewBox="0 0 17 14"><path d="M2.2 9.5 C3 3 10.5 1.5 12.8 7.5" fill="none" stroke="#a9a9a9" stroke-width="3"/><path d="M8.3 6.8 L16.5 6.8 L12.6 12.8 Z" fill="#a9a9a9"/></svg>
<div class="a" style="left:239px;top:63px;width:1px;height:15px;background:#c4c4c4"></div>
<div class="a" style="left:243px;top:59px;width:44px;height:22px;background:#fff"></div>
<div class="a" style="left:275px;top:59px;width:12px;height:22px;background:#f8f8f8"></div>
<svg class="a" style="left:278.5px;top:69px" width="6" height="3" viewBox="0 0 6 3"><path d="M0 0H6L3 3Z" fill="#000"/></svg>
<div class="a" style="left:293px;top:74px;width:15px;height:4px;background:#b9b9b9"></div>
<svg class="a" style="left:314px;top:62px" width="18" height="15" viewBox="0 0 18 15"><path d="M9 1 C14.5 1 17.5 4.5 17.2 8 C17 11 14.5 10 13 11 C11.5 12 13 14.5 9.5 14.5 C4 14.5 0.8 11.5 0.8 7.5 C0.8 3.5 4 1 9 1Z" fill="#f0a030" stroke="#c9701a" stroke-width="0.8"/><circle cx="3.3" cy="6.3" r="1.3" fill="#fff" stroke="#b06010" stroke-width="0.6"/><circle cx="7" cy="3.5" r="1.3" fill="#3fa0ff"/><circle cx="11" cy="3.6" r="1.2" fill="#ff5050"/><circle cx="14" cy="9.2" r="1.5" fill="#40c040"/><circle cx="9.5" cy="11.5" r="1.4" fill="#a080ff"/></svg>
<div class="a" style="left:339px;top:63px;width:13.5px;height:13.5px;border:2.6px solid #050505"></div>
<div class="a" style="left:361px;top:63px;width:1px;height:15px;background:#c4c4c4"></div>
<div class="a" style="left:368px;top:67px;width:3px;height:4px;background:#bdbdbd;border:1px solid #999"></div>
<div class="a" style="left:372.5px;top:66px;width:3.5px;height:8px;background:#bdbdbd;border:1px solid #999"></div>
<div class="a" style="left:377px;top:66px;width:5px;height:6px;background:#bdbdbd;border:1px solid #999"></div>
<div class="a" style="left:394px;top:63px;width:4px;height:4px;background:#bdbdbd;border:1px solid #999"></div>
<div class="a" style="left:394px;top:68px;width:8px;height:3px;background:#bdbdbd;border:1px solid #999"></div>
<div class="a" style="left:394px;top:72px;width:6px;height:5px;background:#bdbdbd;border:1px solid #999"></div>
<div class="a" style="left:413px;top:63px;width:1px;height:15px;background:#c4c4c4"></div>
<svg class="a" style="left:442px;top:62px" width="17" height="15" viewBox="0 0 17 15"><defs><linearGradient id="fn" x1="0" x2="1"><stop offset="0" stop-color="#4d7fc4"/><stop offset="0.5" stop-color="#9cc0ec"/><stop offset="1" stop-color="#4d7fc4"/></linearGradient></defs><path d="M0.5 1 H15.5 L9.5 8 V14 H6.5 V8 Z" fill="url(#fn)" stroke="#5a7fb0" stroke-width="0.7"/><ellipse cx="8" cy="1.8" rx="7.3" ry="1.3" fill="#c9dcf4"/></svg>
<svg class="a" style="left:466px;top:62px" width="14" height="16" viewBox="0 0 14 16"><rect x="0.5" y="0.5" width="13" height="15" fill="#7da7e6" stroke="#4a74b8"/><rect x="1.5" y="0.5" width="1" height="15" fill="#3d67aa"/><text x="8" y="12" text-anchor="middle" font-family="Liberation Sans" font-size="11" fill="#fff">?</text></svg>
<div class="a" style="left:488.5px;top:63px;width:1px;height:15px;background:#c4c4c4"></div>
<div class="a" style="left:491px;top:59px;width:23px;height:22px;border:1px solid #3c8ee0;background:#f4f9ff"></div>
<svg class="a" style="left:495px;top:63px" width="14" height="14" viewBox="0 0 14 14"><rect x="0.5" y="0.5" width="13" height="13" fill="#fff" stroke="#1d4f9e"/><rect x="0.5" y="0.5" width="13" height="3" fill="#2b73d0"/><rect x="2" y="5.5" width="2.5" height="2.5" fill="#4cae4c"/><rect x="2" y="9.5" width="2.5" height="2.5" fill="#4cae4c"/><path d="M5.5 6.8H12M5.5 10.8H12" stroke="#1d3b6e" stroke-width="1.2"/></svg>
<div class="a" style="left:520px;top:62.5px;width:2px;height:2px;background:#9a9a9a"></div>
<div class="a" style="left:520px;top:66.2px;width:2px;height:2px;background:#9a9a9a"></div>
<div class="a" style="left:520px;top:69.9px;width:2px;height:2px;background:#9a9a9a"></div>
<div class="a" style="left:520px;top:73.6px;width:2px;height:2px;background:#9a9a9a"></div>
<svg class="a" style="left:529px;top:62px" width="17" height="16" viewBox="0 0 17 16"><path d="M2.5 7.5 C2.5 3.5 6 1.5 9.5 2 C11.5 2.3 12.5 3.5 13 4.5" fill="none" stroke="#1f9e1f" stroke-width="2.8"/><path d="M10 5.8 L15.8 6.8 L15 0.8 Z" fill="#1f9e1f"/><path d="M14.5 8.5 C14.5 12.5 11 14.5 7.5 14 C5.5 13.7 4.5 12.5 4 11.5" fill="none" stroke="#2cb82c" stroke-width="2.8"/><path d="M7 10.2 L1.2 9.2 L2 15.2 Z" fill="#2cb82c"/></svg>
<svg class="a" style="left:552px;top:62px" width="16" height="16" viewBox="0 0 16 16"><path d="M5 0.5H11L15.5 5V11L11 15.5H5L0.5 11V5Z" fill="#c2c2c2" stroke="#b0b0b0"/><path d="M5 5L11 11M11 5L5 11" stroke="#f2f2f2" stroke-width="2.4"/></svg>
<div class="a" style="left:575.5px;top:63px;width:1px;height:15px;background:#c4c4c4"></div>
<div class="a" style="left:583px;top:63.5px;width:4.5px;height:12.5px;background:#c4c4c4"></div>
<div class="a" style="left:590.5px;top:63.5px;width:4.5px;height:12.5px;background:#c4c4c4"></div>
<div class="a" style="left:582px;top:76px;width:14px;height:1px;background:#d8d8d8"></div>
<svg class="a" style="left:607.5px;top:64px" width="8" height="12" viewBox="0 0 8 12"><path d="M0 0 L8 6 L0 12Z" fill="#c4c4c4"/></svg>
<svg class="a" style="left:628.5px;top:62px" width="12" height="16" viewBox="0 0 12 16"><path d="M3.5 0.5H8.5V5.5H11.5L6 10.5L0.5 5.5H3.5Z" fill="#3d8fe0" stroke="#2a72c0" stroke-width="0.6"/><circle cx="6" cy="13.5" r="2.2" fill="#2f86dc"/></svg>
<div class="a t s" style="left:245.60px;top:63.70px;font-size:12px;line-height:12px;transform:scaleX(0.8608);">10</div>
<div class="a t" style="left:293.20px;top:61.67px;font-size:14.5px;line-height:14.5px;font-weight:bold;color:#1f5cb8;transform:scaleX(1.2399);font-family:'Liberation Serif',serif;">A</div>
<div class="a t s" style="left:418.50px;top:61.75px;font-size:15px;line-height:15px;font-style:italic;color:#222;transform:scaleX(1.2851);font-family:'Liberation Serif',serif;">fx</div>
<div class="a" style="left:5px;top:312px;width:204px;height:219px;background:#fff"></div>
<div class="a" style="left:7px;top:312px;width:3px;height:63px;background:#0d3a66"></div>
<div class="a" style="left:7px;top:375px;width:3px;height:23px;background:#1b65a5"></div>
<div class="a" style="left:10px;top:312px;width:11px;height:219px;background:#f0f0f0"></div>
<svg class="a" style="left:12px;top:316px" width="8" height="5" viewBox="0 0 8 5"><path d="M0 5L4 1L8 5Z" fill="#a8a8a8"/></svg>
<div class="a" style="left:12px;top:324px;width:8px;height:207px;background:#c2c2c2"></div>
<svg class="a" style="left:21px;top:312px;overflow:hidden" width="188" height="219" viewBox="21 312 188 219">
<rect x="21" y="312" width="188" height="219" fill="#e9e9e9"/>
<line x1="31.7" y1="341" x2="31.7" y2="531" stroke="#f2f2f2" stroke-width="1"/>
<g fill="none" stroke="#fff" stroke-linecap="round" stroke-linejoin="round">
<!-- Sheridan Rd -->
<path d="M100 328 L121.3 337.5 Q150 345 166.5 356.4 Q180 368 189.1 379 Q200 395 212 414" stroke-width="4"/>
<path d="M177.8 330 Q176 345 166.5 356.4" stroke-width="1.6"/>
<!-- roads upper -->
<path d="M57.7 341.3 L65.2 352.6 L100 372 L120 380.8 L134.5 388.4 Q146 396 151.4 409 L159 430 L168 455" stroke-width="1.6"/>
<path d="M82 341 L120 358 L151.4 375.2 L166.5 392 L194.7 430 L205 445" stroke-width="1.6"/>
<path d="M68.6 341 L68.6 397.8 L99 411 L110 416" stroke-width="1.6"/>
<path d="M82.1 430 L110 407.2 L134.5 390.3 L170.3 362" stroke-width="1.6"/>
<path d="M181.6 369.5 L202.3 356.4" stroke-width="1.6"/>
<path d="M21 380.8 Q30 390 29.4 396 L21 409 M21 395 L38.8 395" stroke-width="1.4"/>
<path d="M21 409 L42.6 430 L56.1 454.7" stroke-width="1.4"/>
<path d="M42.8 430 L56.1 454.7" stroke-width="1.4"/>
<path d="M110 422 L118 431" stroke-width="1.4"/>
<!-- roads lower -->
<path d="M110 442.4 L134.7 435.7 L167 437.6 L210 450" stroke-width="1.6"/>
<path d="M113.8 430 L132.8 447 L159.4 486 L172.7 487 L182.2 496.5 L191.7 515.5 L199.4 531" stroke-width="1.6"/>
<path d="M159.4 430 L162 437 M191.7 430 L199.4 445" stroke-width="1.4"/>
<path d="M182.2 464.2 Q172 478 159.4 486 L127.1 506" stroke-width="1.4"/>
<path d="M144.2 460.4 L155 459.5" stroke-width="1.2"/>
<path d="M119.5 464.2 L155.6 525" stroke-width="1.4"/>
<path d="M111.9 481.3 L125.2 474.7" stroke-width="1.4"/>
<path d="M191.7 510 L210 487 M186 531 L210 500 M197 510 L210 510" stroke-width="1.4"/>
<path d="M51.4 454.7 L77 453.8 M56.1 454.7 L52.3 477.5 L21 484.2" stroke-width="1.4"/>
<path d="M71.3 454.7 L109.4 517.5" stroke-width="1.4"/>
<path d="M65.6 478.5 L100 531" stroke-width="1.4"/>
<path d="M75.1 491.8 L88.4 484.2 M42.8 479.4 L50.4 490.8 M48.5 503.2 L60.9 502.2 M68.5 508.9 L80.8 502.2 M21 524.1 L58 525 M21 502.2 L31.4 531" stroke-width="1.4"/>
<path d="M21 466 L63.7 531" stroke-width="3.5"/>
</g>
<!-- St Johns Ave with park -->
<path d="M17.8 342 L22.7 350 L33.9 370 L73.2 430 L119 505 L132.5 531" fill="none" stroke="#b7e2a9" stroke-width="4.2"/>
<path d="M84 429 L91 444" stroke="#b7e2a9" stroke-width="7"/>
<path d="M95 448 L103 462" stroke="#b7e2a9" stroke-width="7"/>
<path d="M24.5 330 L35.7 350 L46.5 370 L79 430 L125 505 L140.3 531" fill="none" stroke="#fff" stroke-width="3.8"/>
<path d="M109 517 L140 517 L150 531 L109 531 Z" fill="#b7e2a9"/>
<path d="M24 526 L58 526 L58 531 L24 531 Z" fill="#c5e7b9"/>
<circle cx="21" cy="527" r="4" fill="#2aa236"/>
<!-- labels -->
<g font-family="Liberation Sans" fill="#5c5c5c" stroke="#f4f4f4" stroke-width="1.2" paint-order="stroke">
<text x="123" y="340" font-size="6.5" transform="rotate(20 123 340)">ridan Rd</text>
<text x="126" y="361" font-size="5" transform="rotate(30 126 361)">Lincoln Ave S</text>
<text x="65" y="403" font-size="5.5" transform="rotate(62 65 403)">St Johns Ave</text>
<text x="80" y="432" font-size="5" transform="rotate(-30 80 432)">Beech St</text>
<text x="113" y="434" font-size="5" transform="rotate(62 113 434)">Wade St</text>
<text x="52" y="446" font-size="5" transform="rotate(90 52 446)">Ridgewood Dr</text>
<text x="28" y="488" font-size="6" transform="rotate(58 28 488)">Green Bay Rd</text>
<text x="63" y="503" font-size="5" transform="rotate(62 63 503)">Broadview Ave</text>
<text x="84" y="505" font-size="5" transform="rotate(62 84 505)">Pleasant Ave</text>
<text x="130" y="480" font-size="5" transform="rotate(62 130 480)">Judson Ave</text>
<text x="115" y="489" font-size="5.5" transform="rotate(62 115 489)">St Johns Ave</text>
<text x="198" y="443" font-size="5" transform="rotate(15 198 443)">Cedar</text>
</g>
<text x="165.5" y="384.6" font-family="Liberation Sans" font-size="7.3" fill="#7a8c9c">North Suburb</text>
<text x="156" y="392" font-family="Liberation Sans" font-size="7.3" fill="#7a8c9c">Synagogue Beth</text>
<text x="85" y="473.9" font-family="Liberation Sans" font-size="7.8" fill="#2f8f40" textLength="32" lengthAdjust="spacingAndGlyphs">Longview</text>
<text x="93.4" y="481" font-family="Liberation Sans" font-size="7.8" fill="#2f8f40" textLength="15" lengthAdjust="spacingAndGlyphs">Park</text>
<rect x="142.3" y="516.5" width="27.6" height="9" fill="#fff"/>
<text x="145" y="524.3" font-family="Liberation Sans" font-size="8" font-weight="bold" fill="#222">673 ft</text>
<text x="116.7" y="532" font-family="Liberation Sans" font-size="8.5" fill="#e3826a">Happi Sushi Japanese</text>
<circle cx="155.6" cy="533" r="6.5" fill="#d9261f"/>
<!-- map/satellite bar -->
<rect x="27" y="312" width="96.4" height="29.8" fill="#fff"/>
<line x1="66" y1="314" x2="66" y2="341" stroke="#e3e3e3"/>
<text x="36.8" y="334" font-family="Liberation Sans" font-size="11" font-weight="bold" fill="#222" textLength="20" lengthAdjust="spacingAndGlyphs">Map</text>
<text x="76.8" y="334" font-family="Liberation Sans" font-size="11" fill="#777" textLength="36" lengthAdjust="spacingAndGlyphs">Satellite</text>
</svg>
<div class="a" style="left:210px;top:59px;width:4px;height:275px;background:linear-gradient(to right,rgba(0,0,0,0.32),rgba(0,0,0,0.12) 40%,rgba(0,0,0,0))"></div>
<div class="a" style="left:35px;top:331px;width:179px;height:4px;background:linear-gradient(to bottom,rgba(0,0,0,0.32),rgba(0,0,0,0.12) 40%,rgba(0,0,0,0))"></div>
<div class="a" style="left:31px;top:55px;width:179px;height:276px;background:#fcfcfc;border:1px solid #7b7b7b;border-top:none"></div>
<div class="a" style="left:67px;top:55px;width:143px;height:1px;background:#7b7b7b"></div>
<div class="a" style="left:32px;top:57px;width:24px;height:273px;background:#f1f1f1"></div>
<div class="a" style="left:64px;top:126.0px;width:144px;height:1px;background:#d7d7d7"></div>
<div class="a" style="left:64px;top:176.0px;width:144px;height:1px;background:#d7d7d7"></div>
<div class="a" style="left:64px;top:248.0px;width:144px;height:1px;background:#d7d7d7"></div>
<div class="a" style="left:64px;top:276.0px;width:144px;height:1px;background:#d7d7d7"></div>
<div class="a" style="left:64px;top:304.0px;width:144px;height:1px;background:#d7d7d7"></div>
<div class="a" style="left:33px;top:279px;width:175px;height:22px;background:#bedaf4;border:1px solid #2b86e2"></div>
<svg class="a" style="left:193px;top:286px" width="5" height="9"><path d="M0 0L5 4.5L0 9Z" fill="#111"/></svg>
<svg class="a" style="left:36px;top:60px" width="14" height="16" viewBox="0 0 14 16"><defs><linearGradient id="pg2" x1="0" y1="0" x2="1" y2="1"><stop offset="0" stop-color="#fff"/><stop offset="1" stop-color="#dfe2ea"/></linearGradient></defs><path d="M0.5 0.5H9L13.5 5V15.5H0.5Z" fill="url(#pg2)" stroke="#9aa0ab"/><path d="M9 0.5V5H13.5" fill="#ececec" stroke="#9aa0ab"/></svg>
<svg class="a" style="left:36px;top:83px" width="16" height="15" viewBox="0 0 16 15"><defs><linearGradient id="fo" x1="0" y1="0" x2="0" y2="1"><stop offset="0" stop-color="#5aa0f0"/><stop offset="1" stop-color="#1040c0"/></linearGradient></defs><path d="M0.5 2.5H5L6.5 4H13V14.5H0.5Z" fill="#3f7fd8" stroke="#1b4fb0" stroke-width="0.8"/><path d="M4 6 L11 0.8 L13.5 4.5 L7 9Z" fill="#eef2fb" stroke="#8090b0" stroke-width="0.6"/><path d="M2.5 7.5H15.5L13 14.5H0.5Z" fill="url(#fo)" stroke="#1b4fb0" stroke-width="0.8"/><path d="M4 10.5H12" stroke="#bcd8ff" stroke-width="1"/></svg>
<svg class="a" style="left:36px;top:104px" width="16" height="16" viewBox="0 0 16 16"><defs><radialGradient id="cl" cx="0.4" cy="0.35" r="0.7"><stop offset="0" stop-color="#7c8190"/><stop offset="1" stop-color="#2e3240"/></radialGradient></defs><circle cx="8" cy="8" r="7.5" fill="url(#cl)"/><path d="M5 5L11 11M11 5L5 11" stroke="#fff" stroke-width="2.3"/></svg>
<svg class="a" style="left:37px;top:133px" width="14" height="14" viewBox="0 0 14 14"><rect x="0.5" y="0.5" width="13" height="13" rx="1" fill="#2d3566"/><rect x="2" y="1" width="10" height="5" fill="#c8cde8"/><rect x="3" y="1.5" width="1.5" height="2" fill="#2d3566"/><rect x="2" y="7.5" width="10" height="5.5" fill="#e6e8f4"/><path d="M2 9.5H12" stroke="#a6acd0" stroke-width="0.8"/></svg>
<svg class="a" style="left:36px;top:154px" width="16" height="16" viewBox="0 0 16 16"><rect x="0.5" y="2.5" width="13" height="13" rx="1" fill="#2d3566"/><rect x="2" y="3" width="10" height="5" fill="#c8cde8"/><rect x="3" y="3.5" width="1.5" height="2" fill="#2d3566"/><rect x="2" y="9.5" width="10" height="5.5" fill="#e6e8f4"/><path d="M6.5 12.5 L12.5 1.5 L15 3 L9 14 L6 15Z" fill="#f5b21c" stroke="#b57400" stroke-width="0.6"/></svg>
<svg class="a" style="left:36px;top:204px" width="16" height="16" viewBox="0 0 16 16"><rect x="4" y="0.5" width="8" height="5" fill="#fff" stroke="#444"/><rect x="0.5" y="5" width="15" height="7" rx="2" fill="#e0e0e0" stroke="#333"/><rect x="3" y="10" width="10" height="5" fill="#fff" stroke="#333"/><circle cx="2.8" cy="7.3" r="0.8" fill="#3cb03c"/></svg>
<svg class="a" style="left:36px;top:226px" width="17" height="16" viewBox="0 0 17 16"><rect x="4" y="0.5" width="8" height="5" fill="#fff" stroke="#444"/><rect x="0.5" y="5" width="15" height="7" rx="2" fill="#e0e0e0" stroke="#333"/><rect x="3" y="10" width="5" height="4" fill="#fff" stroke="#333"/><circle cx="2.8" cy="7.3" r="0.8" fill="#3cb03c"/><rect x="8.5" y="8.5" width="7.5" height="6.5" fill="#fff" stroke="#000" stroke-dasharray="1.5 1"/></svg>
<svg class="a" style="left:36px;top:254px" width="14" height="15" viewBox="0 0 14 15"><path d="M0.5 0.5H9L12.5 4V14.5H0.5Z" fill="#f4f4f8" stroke="#a8acb8"/><path d="M3 13 L9.5 1.5 L11.5 2.5 L5 14 L2.7 14.8Z" fill="#f5a41c" stroke="#c06a00" stroke-width="0.6"/></svg>
<svg class="a" style="left:36px;top:310px" width="16" height="16" viewBox="0 0 16 16"><defs><linearGradient id="ex" x1="0" y1="0" x2="0" y2="1"><stop offset="0" stop-color="#e08a60"/><stop offset="1" stop-color="#c45a30"/></linearGradient></defs><rect x="0.6" y="0.6" width="14.8" height="14.8" rx="3" fill="url(#ex)" stroke="#b03c18" stroke-width="1.1"/><circle cx="8" cy="8" r="4.6" fill="none" stroke="#fff" stroke-width="1.7"/><path d="M8 5V11" stroke="#fff" stroke-width="1.7"/></svg>
<div class="a t s" style="left:66.80px;top:62.00px;font-size:12px;line-height:12px;transform:scaleX(0.9899);">New page</div>
<div class="a t s" style="left:141.80px;top:62.00px;font-size:12px;line-height:12px;transform:scaleX(1.0890);">Ctrl+N</div>
<div class="a t s" style="left:66.80px;top:84.00px;font-size:12px;line-height:12px;transform:scaleX(0.9553);">Open...</div>
<div class="a t s" style="left:141.80px;top:84.00px;font-size:12px;line-height:12px;transform:scaleX(1.0681);">Ctrl+O</div>
<div class="a t s" style="left:66.80px;top:106.00px;font-size:12px;line-height:12px;transform:scaleX(0.9717);">Close page</div>
<div class="a t s" style="left:138.80px;top:106.00px;font-size:12px;line-height:12px;transform:scaleX(1.0180);">Ctrl+F4</div>
<div class="a t s" style="left:66.80px;top:134.00px;font-size:12px;line-height:12px;transform:scaleX(0.8955);">Save</div>
<div class="a t s" style="left:144.20px;top:134.00px;font-size:12px;line-height:12px;transform:scaleX(1.0449);">Ctrl+S</div>
<div class="a t s" style="left:66.80px;top:156.00px;font-size:12px;line-height:12px;transform:scaleX(0.8899);">Save as...</div>
<div class="a t s" style="left:66.80px;top:184.00px;font-size:12px;line-height:12px;transform:scaleX(0.9555);">Page Setup...</div>
<div class="a t s" style="left:66.80px;top:206.00px;font-size:12px;line-height:12px;transform:scaleX(1.0032);">Print...</div>
<div class="a t s" style="left:143.20px;top:206.00px;font-size:12px;line-height:12px;transform:scaleX(1.0746);">Ctrl+P</div>
<div class="a t s" style="left:66.80px;top:228.00px;font-size:12px;line-height:12px;transform:scaleX(0.9934);">Print Preview...</div>
<div class="a t s" style="left:66.80px;top:256.00px;font-size:12px;line-height:12px;transform:scaleX(0.9891);">Properties...</div>
<div class="a t s" style="left:66.80px;top:284.00px;font-size:12px;line-height:12px;transform:scaleX(0.9295);">Recent Files</div>
<div class="a t s" style="left:66.80px;top:312.00px;font-size:12px;line-height:12px;transform:scaleX(0.8743);">Exit</div>
<div class="a t s" style="left:142.30px;top:312.00px;font-size:12px;line-height:12px;transform:scaleX(1.0567);">Alt+F4</div>
<div class="a" style="left:420px;top:283px;width:4px;height:248px;background:linear-gradient(to right,rgba(0,0,0,0.32),rgba(0,0,0,0.12) 40%,rgba(0,0,0,0))"></div>
<div class="a" style="left:209px;top:279px;width:211px;height:252px;background:#fcfcfc;border:1px solid #7b7b7b"></div>
<div class="a" style="left:210px;top:280px;width:24px;height:250px;background:#f1f1f1"></div>
<div class="a" style="left:211px;top:281px;width:207px;height:22px;background:#bedaf4;border:1px solid #2b86e2"></div>
<div class="a" style="left:242px;top:503.5px;width:176px;height:1px;background:#d7d7d7"></div>
<div class="a t s" style="left:244.50px;top:286.00px;font-size:12px;line-height:12px;transform:scaleX(0.9707);">Wind_Loads-REV-H.sm</div>
<div class="a t s" style="left:244.50px;top:308.00px;font-size:12px;line-height:12px;transform:scaleX(0.9746);">Static Pile Capacity-18.sm</div>
<div class="a t s" style="left:244.50px;top:330.00px;font-size:12px;line-height:12px;transform:scaleX(0.9809);">Static Pile Capacity.sm</div>
<div class="a t s" style="left:244.50px;top:352.00px;font-size:12px;line-height:12px;transform:scaleX(0.9208);">TR_Screws_Data.sm</div>
<div class="a t s" style="left:244.50px;top:374.00px;font-size:12px;line-height:12px;transform:scaleX(0.9840);">Loads.sm</div>
<div class="a t s" style="left:244.50px;top:396.00px;font-size:12px;line-height:12px;transform:scaleX(0.9671);">Wind_Loads-REV-H2.sm</div>
<div class="a t s" style="left:244.50px;top:418.00px;font-size:12px;line-height:12px;transform:scaleX(1.0064);">spring constants.sm</div>
<div class="a t s" style="left:244.50px;top:440.00px;font-size:12px;line-height:12px;transform:scaleX(0.9707);">Wind_Loads-REV-H.sm</div>
<div class="a t s" style="left:244.50px;top:462.00px;font-size:12px;line-height:12px;transform:scaleX(1.0186);">dogbone-calcs.sm</div>
<div class="a t s" style="left:244.50px;top:484.00px;font-size:12px;line-height:12px;transform:scaleX(0.9349);">P_Sand_RC_Tension.xmcd</div>
<div class="a t s" style="left:244.50px;top:512.20px;font-size:12px;line-height:12px;transform:scaleX(0.9660);">Clear Files list</div>
<div class="a" style="left:266px;top:317px;width:393px;height:20px;background:rgba(0,0,0,0.12);filter:blur(1px)"></div>
<div class="a" style="left:263px;top:314px;width:393px;height:20px;background:#fff;border:1px solid #767676"></div>
<div class="a t s" style="left:269.00px;top:318.30px;font-size:12px;line-height:12px;color:#555555;transform:scaleX(0.9759);">F:\Forge\7811 CH41377D Silverstein II\Structural\Wind_Loads-REV-H.sm</div>

</body></html>
